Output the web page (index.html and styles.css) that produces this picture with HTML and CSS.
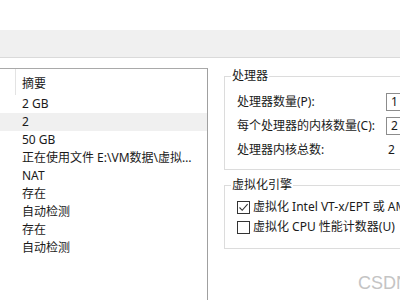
FILE: index.html
```
<!DOCTYPE html>
<html lang="zh-CN">
<head>
    <meta charset="UTF-8">
    <title>虚拟机设置</title>
    <link rel="stylesheet" href="styles.css">
</head>
<body>
    <div class="titlebar"></div>
    <div class="toolbar"></div>

    <div class="main">
        <div class="device-list">
            <div class="list-head">
                <div class="col-key"></div>
                <div class="col-summary">摘要</div>
            </div>
            <div class="list-row"><span class="col-key"></span><span class="cell">2 GB</span></div>
            <div class="list-row selected"><span class="col-key"></span><span class="cell">2</span></div>
            <div class="list-row"><span class="col-key"></span><span class="cell">50 GB</span></div>
            <div class="list-row"><span class="col-key"></span><span class="cell">正在使用文件 E:\VM数据\虚拟…</span></div>
            <div class="list-row"><span class="col-key"></span><span class="cell">NAT</span></div>
            <div class="list-row"><span class="col-key"></span><span class="cell">存在</span></div>
            <div class="list-row"><span class="col-key"></span><span class="cell">自动检测</span></div>
            <div class="list-row"><span class="col-key"></span><span class="cell">存在</span></div>
            <div class="list-row"><span class="col-key"></span><span class="cell">自动检测</span></div>
        </div>

        <div class="settings">
            <fieldset class="group processor">
                <legend>处理器</legend>
                <div class="form-grid">
                    <label>处理器数量(P):</label>
                    <div class="input-box">1</div>
                    <label>每个处理器的内核数量(C):</label>
                    <div class="input-box">2</div>
                    <label>处理器内核总数:</label>
                    <div class="value">2</div>
                </div>
            </fieldset>

            <fieldset class="group engine">
                <legend>虚拟化引擎</legend>
                <div class="check-row">
                    <span class="checkbox">
                        <svg width="11" height="11" viewBox="0 0 11 11"><path d="M1.5 5.5 L4.2 8.3 L9.6 2.2" fill="none" stroke="#333" stroke-width="1.1"/></svg>
                    </span>
                    <span>虚拟化 Intel VT-x/EPT 或 AMD-V/RVI(V)</span>
                </div>
                <div class="check-row">
                    <span class="checkbox"></span>
                    <span>虚拟化 CPU 性能计数器(U)</span>
                </div>
            </fieldset>
        </div>
    </div>

    <div class="watermark">CSDN</div>
</body>
</html>
```

FILE: styles.css
```
body {
    margin: 0;
    width: 400px;
    height: 300px;
    overflow: hidden;
    background: #fff;
    color: #1a1a1a;
    font-family: "Noto Sans", "Noto Sans CJK SC", sans-serif;
    font-size: 12px;
    line-height: 16px;
    position: relative;
}

.titlebar {
    height: 30px;
}

.toolbar {
    height: 27px;
    background: #f0f0f0;
    border-bottom: 1px solid #dadada;
}

.main {
    display: flex;
    height: 242px;
}

/* left list of devices */
.device-list {
    width: 207px;
    flex-shrink: 0;
    margin-top: 10px;
    border-top: 1px solid #a9a9a9;
    border-right: 1px solid #a0a0a0;
}

.list-head {
    display: flex;
    height: 26px;
}

.list-head .col-key {
    width: 15px;
    border-right: 1px solid #e3e3e3;
}

.col-summary {
    padding: 7px 0 0 6px;
}

.list-row {
    display: flex;
    height: 18px;
    align-items: center;
    white-space: nowrap;
}

.list-row .col-key {
    width: 16px;
}

.list-row .cell {
    padding-left: 6px;
}

.list-row.selected {
    background: #f0f0f0;
}

/* right side settings */
.settings {
    padding: 10px 0 0 16px;
    display: flex;
    flex-direction: column;
    gap: 7px;
}

.group {
    margin: 0;
    width: 200px;
    border: 1px solid #dcdcdc;
    padding: 9px 0 10px 12px;
    white-space: nowrap;
}

.group legend {
    padding: 0 1px;
    margin-left: -6px;
    line-height: 16px;
}

.form-grid {
    display: grid;
    grid-template-columns: 149px auto;
    grid-auto-rows: 18px;
    row-gap: 6px;
    align-items: center;
}

.input-box {
    width: 40px;
    height: 16px;
    border: 1px solid #8c8c8c;
    padding-left: 4px;
    line-height: 16px;
}

.value {
    padding-left: 2px;
}

.engine {
    padding: 6px 0 13px 12px;
}

.check-row {
    display: flex;
    align-items: center;
    gap: 3px;
    height: 16px;
    margin-bottom: 4px;
}

.check-row:last-child {
    margin-bottom: 0;
}

.checkbox {
    width: 11px;
    height: 11px;
    border: 1px solid #333;
    display: flex;
    flex-shrink: 0;
}

.watermark {
    position: absolute;
    left: 358px;
    top: 272px;
    font-size: 18px;
    line-height: 22px;
    color: #c4c4c4;
    font-family: "Liberation Sans", sans-serif;
}
```
